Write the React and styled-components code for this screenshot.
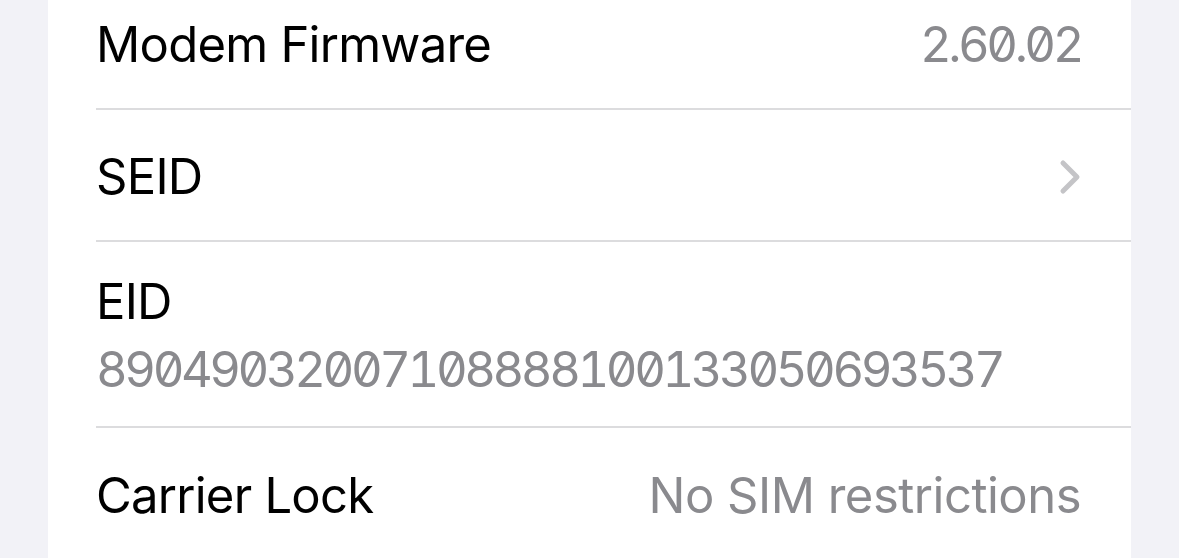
import React from "react";
import styled, { createGlobalStyle } from "styled-components";

const GlobalStyle = createGlobalStyle`
  html, body {
    margin: 0;
    padding: 0;
    background: #f2f2f7;
    overflow: hidden;
  }
  body {
    font-family: Inter, "Noto Sans", sans-serif;
  }
`;

const Page = styled.div`
  width: 1179px;
  height: 558px;
  background: #f2f2f7;
  padding: 0 48px;
  box-sizing: border-box;
  overflow: hidden;
`;

const Card = styled.div`
  margin-top: -22px;
  background: #ffffff;
  display: flex;
  flex-direction: column;
`;

const Row = styled.div`
  margin-left: 48px;
  padding-right: 50px;
  padding-top: 3px;
  height: ${(p) => (p.tall ? 186 : 132)}px;
  box-sizing: border-box;
  display: flex;
  flex-direction: ${(p) => (p.tall ? "column" : "row")};
  align-items: ${(p) => (p.tall ? "flex-start" : "center")};
  justify-content: ${(p) => (p.tall ? "center" : "space-between")};
  gap: ${(p) => (p.tall ? 10 : 0)}px;
  border-bottom: ${(p) => (p.last ? "none" : "2px solid #dcdcde")};
`;

const Label = styled.span`
  font-size: 49px;
  color: #000000;
  letter-spacing: -0.75px;
  line-height: 58px;
  white-space: nowrap;
`;

const Value = styled.span`
  font-size: 49px;
  color: #8a8a8e;
  letter-spacing: ${(p) => (p.digits ? "-3.45px" : "-0.5px")};
  line-height: 58px;
  white-space: nowrap;
  font-feature-settings: ${(p) => (p.digits ? '"tnum" 1, "zero" 1' : "normal")};
`;

const Chevron = () => (
  <svg width="22" height="36" viewBox="0 0 22 36">
    <path
      d="M4 4 L18 18 L4 32"
      fill="none"
      stroke="#c4c4c7"
      strokeWidth="5"
      strokeLinecap="round"
      strokeLinejoin="round"
    />
  </svg>
);

export default function App() {
  return (
    <Page>
      <GlobalStyle />
      <Card>
        <Row>
          <Label>Modem Firmware</Label>
          <Value digits>2.60.02</Value>
        </Row>
        <Row>
          <Label>SEID</Label>
          <Chevron />
        </Row>
        <Row tall>
          <Label>EID</Label>
          <Value digits>89049032007108888100133050693537</Value>
        </Row>
        <Row last>
          <Label>Carrier Lock</Label>
          <Value>No SIM restrictions</Value>
        </Row>
      </Card>
    </Page>
  );
}
